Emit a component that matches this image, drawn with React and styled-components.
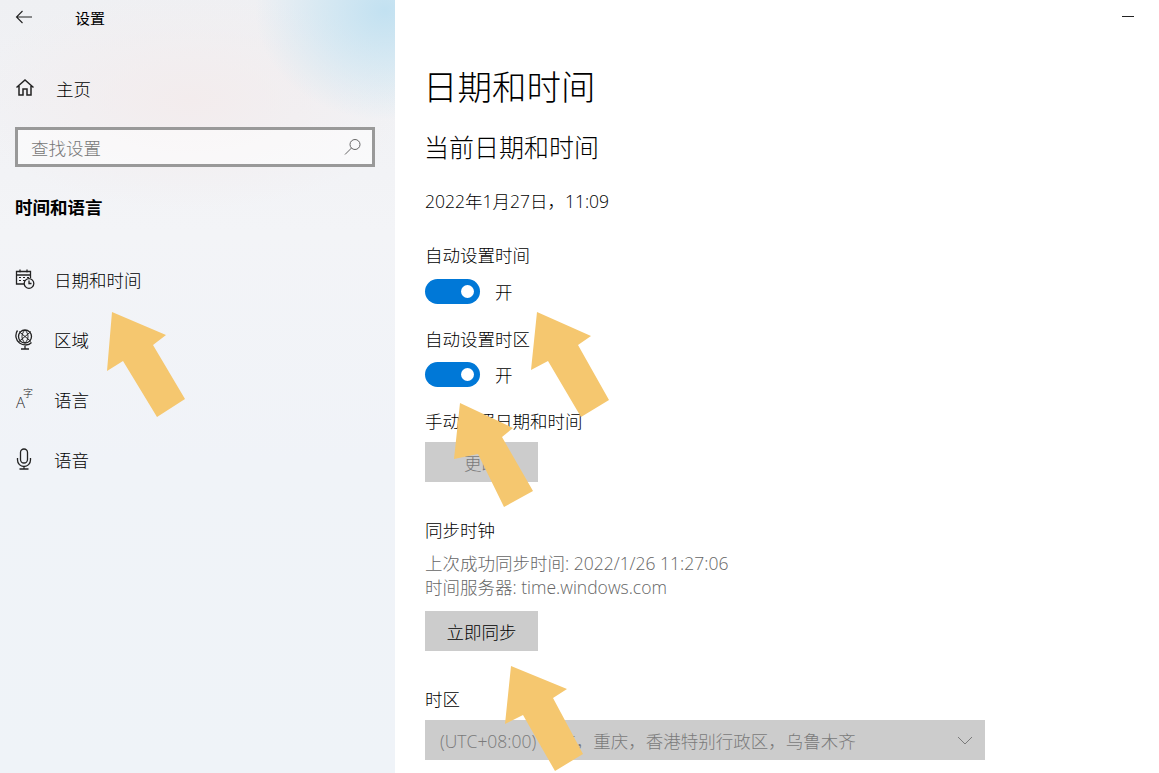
import React from 'react'
import styled, { createGlobalStyle } from 'styled-components'

const GlobalStyle = createGlobalStyle`
  html, body {
    margin: 0;
    padding: 0;
    background: #fff;
  }
  body {
    font-family: 'Open Sans', 'Noto Sans CJK SC', sans-serif;
    color: #000;
  }
`

const Page = styled.div`
  position: relative;
  width: 1159px;
  height: 773px;
  overflow: hidden;
  display: flex;
`

const Sidebar = styled.aside`
  width: 395px;
  flex: none;
  padding-left: 15px;
  padding-right: 20px;
  box-sizing: border-box;
  background:
    radial-gradient(ellipse 130px 110px at 385px 10px, #c2e1f1 0%, rgba(200, 228, 242, 0.6) 50%, rgba(230, 240, 246, 0) 100%),
    radial-gradient(ellipse 220px 110px at 190px 100px, #f3eced 0%, rgba(243, 236, 237, 0) 100%),
    linear-gradient(180deg, #eff0f3 0%, #f3f4f7 30%, #f0f3f8 60%, #eff3f8 100%);
`

const TitleBar = styled.div`
  height: 34px;
  display: flex;
  align-items: center;
  font-size: 15px;
  span {
    margin-left: 40px;
  }
`

const IconSlot = styled.div`
  width: 20px;
  height: 24px;
  flex: none;
  display: flex;
  align-items: center;
  justify-content: flex-start;
  position: relative;
  color: #222;
`

const HomeRow = styled.div`
  margin-top: 36px;
  height: 36px;
  display: flex;
  align-items: center;
  gap: 21px;
  font-size: 17.5px;
  font-weight: 300;
`

const SearchBox = styled.div`
  margin-top: 21px;
  height: 40px;
  box-sizing: border-box;
  border: 3px solid #999;
  background: rgba(255, 255, 255, 0.55);
  display: flex;
  align-items: center;
  justify-content: space-between;
  padding: 0 10px 0 13px;
  font-size: 17.5px;
  font-weight: 300;
  color: #777;
`

const SectionTitle = styled.div`
  margin-top: 24px;
  height: 32px;
  line-height: 32px;
  font-size: 17.5px;
  font-weight: 700;
`

const NavList = styled.nav`
  margin-top: 26px;
  display: flex;
  flex-direction: column;
`

const NavItem = styled.div`
  height: 60px;
  display: flex;
  align-items: center;
  gap: 19px;
  font-size: 17.5px;
  font-weight: 300;
`

const Main = styled.main`
  flex: 1;
  padding: 63px 0 0 28px;
  position: relative;
`

const MinimizeMark = styled.div`
  position: absolute;
  top: 16px;
  right: 25px;
  width: 12px;
  height: 1px;
  background: #222;
`

const PageTitle = styled.h1`
  margin: 0;
  height: 48px;
  line-height: 48px;
  font-size: 34.5px;
  font-weight: 300;
`

const Content = styled.div`
  padding-left: 2px;
`

const SubTitle = styled.h2`
  margin: 18px 0 0;
  height: 36px;
  line-height: 36px;
  font-size: 25px;
  font-weight: 300;
  margin-left: -1px;
`

const Line = styled.div`
  margin-top: ${p => p.$top || 0}px;
  height: 24px;
  line-height: 24px;
  font-size: 17.5px;
  font-weight: 300;
  white-space: nowrap;
`

const Muted = styled.div`
  margin-top: 10px;
  line-height: 23.5px;
  font-size: 17.5px;
  font-weight: 300;
  color: #666;
`

const ToggleRow = styled.div`
  margin-top: ${p => p.$top}px;
  height: 25px;
  display: flex;
  align-items: center;
  gap: 15px;
  font-size: 17.5px;
  font-weight: 300;
`

const Toggle = styled.div`
  width: 55px;
  height: 25px;
  border-radius: 13px;
  background: #0078d7;
  position: relative;
  &::after {
    content: '';
    position: absolute;
    right: 6px;
    top: 6px;
    width: 13px;
    height: 13px;
    border-radius: 50%;
    background: #fff;
  }
`

const Button = styled.div`
  margin-top: ${p => p.$top}px;
  width: 113px;
  height: 40px;
  background: #ccc;
  color: ${p => (p.$disabled ? '#7a7a7a' : '#000')};
  display: flex;
  align-items: center;
  justify-content: center;
  font-size: 17.5px;
  font-weight: 300;
`

const Select = styled.div`
  margin-top: 9px;
  width: 560px;
  height: 40px;
  box-sizing: border-box;
  padding: 0 12px 0 15px;
  background: #ccc;
  color: #7a7a7a;
  display: flex;
  align-items: center;
  justify-content: space-between;
  font-size: 17.5px;
  font-weight: 300;
  white-space: nowrap;
`

const ArrowLayer = styled.svg`
  position: absolute;
  inset: 0;
  width: 1159px;
  height: 773px;
  pointer-events: none;
  polygon {
    fill: #f5c76f;
  }
`

const TextIconSmall = styled.span`
  position: absolute;
  left: 8px;
  top: 0;
  font-size: 10px;
  line-height: 12px;
`

const TextIconLarge = styled.span`
  position: absolute;
  left: 1px;
  top: 5px;
  font-size: 15px;
  line-height: 20px;
`

const BackIcon = () => (
  <svg width="18" height="14" viewBox="0 0 18 14" fill="none" stroke="currentColor" strokeWidth="1.1">
    <path d="M17 7H1.5M7.5 1L1.5 7l6 6" />
  </svg>
)

const HomeIcon = () => (
  <svg width="20" height="20" viewBox="0 0 20 20" fill="none" stroke="currentColor" strokeWidth="1.5">
    <path d="M1.5 9.5L10 2l8.500 7.500M4 8v9h4v-6h4v6h4V8" />
  </svg>
)

const SearchIcon = () => (
  <svg width="18" height="18" viewBox="0 0 18 18" fill="none" stroke="#666" strokeWidth="1">
    <circle cx="11" cy="6.500" r="5" />
    <path d="M7.500 10L1 16.500" />
  </svg>
)

const CalendarIcon = () => (
  <svg width="20" height="22" viewBox="0 0 20 22" fill="none" stroke="currentColor" strokeWidth="1.3">
    <path d="M9 16H1.500V3.500h14V10M1.500 7h14M5 1.500v3M12 1.500v3" />
    <path d="M4 9.500h2M8 9.500h2M12 9.500h2M4 12.500h2M8 12.500h2" strokeWidth="1" />
    <circle cx="14" cy="15.500" r="4.800" fill="#f1f3f6" />
    <path d="M14 12.500v3h2.500" />
  </svg>
)

const GlobeIcon = () => (
  <svg width="20" height="22" viewBox="0 0 20 22" fill="none" stroke="currentColor" strokeWidth="1.3">
    <circle cx="10" cy="8.500" r="6.500" />
    <path d="M4 3.500l12 10M16 3.500l-12 10M10 2c-4 4-4 9 0 13M10 2c4 4 4 9 0 13" strokeWidth="1" />
    <path d="M2.500 2.500c-3 4-1.500 10 2 12.500s9 3 12-.5M10 18v3M6 21h8" />
  </svg>
)

const MicIcon = () => (
  <svg width="18" height="22" viewBox="0 0 18 22" fill="none" stroke="currentColor" strokeWidth="1.3">
    <rect x="5.500" y="1" width="7" height="14" rx="3.500" />
    <path d="M2.500 10v2a6.500 6.500 0 0 0 13 0v-2M9 18.500V21M4.500 21h9" />
  </svg>
)

const ChevronIcon = () => (
  <svg width="16" height="9" viewBox="0 0 16 9" fill="none" stroke="#7a7a7a" strokeWidth="1">
    <path d="M1 1l7 7 7-7" />
  </svg>
)

const arrows = [
  '112,312 166,335 153,345 185,399 157,417 123,361 107,371',
  '537,312 591,336 578,345 609,400 581,417 548,361 531,370',
  '460,403 513,428 502,437 533,491 504,507 478,454 454,459',
  '511,666 567,689 553,698 583,754 555,771 523,715 505,724',
]

const navItems = [
  { label: '日期和时间', icon: <CalendarIcon /> },
  { label: '区域', icon: <GlobeIcon /> },
  {
    label: '语言',
    icon: (
      <>
        <TextIconLarge>A</TextIconLarge>
        <TextIconSmall>字</TextIconSmall>
      </>
    ),
  },
  { label: '语音', icon: <MicIcon /> },
]

export default function App() {
  return (
    <Page>
      <GlobalStyle />
      <Sidebar>
        <TitleBar>
          <IconSlot>
            <BackIcon />
          </IconSlot>
          <span>设置</span>
        </TitleBar>
        <HomeRow>
          <IconSlot>
            <HomeIcon />
          </IconSlot>
          主页
        </HomeRow>
        <SearchBox>
          查找设置
          <SearchIcon />
        </SearchBox>
        <SectionTitle>时间和语言</SectionTitle>
        <NavList>
          {navItems.map(item => (
            <NavItem key={item.label}>
              <IconSlot>{item.icon}</IconSlot>
              {item.label}
            </NavItem>
          ))}
        </NavList>
      </Sidebar>
      <Main>
        <MinimizeMark />
        <PageTitle>日期和时间</PageTitle>
        <Content>
          <SubTitle>当前日期和时间</SubTitle>
          <Line $top={24}>2022年1月27日，11:09</Line>
          <Line $top={30}>自动设置时间</Line>
          <ToggleRow $top={12}>
            <Toggle />开
          </ToggleRow>
          <Line $top={23}>自动设置时区</Line>
          <ToggleRow $top={11}>
            <Toggle />开
          </ToggleRow>
          <Line $top={22}>手动设置日期和时间</Line>
          <Button $top={9} $disabled>更改</Button>
          <Line $top={36}>同步时钟</Line>
          <Muted>
            上次成功同步时间: 2022/1/26 11:27:06
            <br />
            时间服务器: time.windows.com
          </Muted>
          <Button $top={12}>立即同步</Button>
          <Line $top={36}>时区</Line>
          <Select>
            (UTC+08:00) 北京，重庆，香港特别行政区，乌鲁木齐
            <ChevronIcon />
          </Select>
        </Content>
      </Main>
      <ArrowLayer viewBox="0 0 1159 773">
        {arrows.map(points => (
          <polygon key={points} points={points} />
        ))}
      </ArrowLayer>
    </Page>
  )
}
